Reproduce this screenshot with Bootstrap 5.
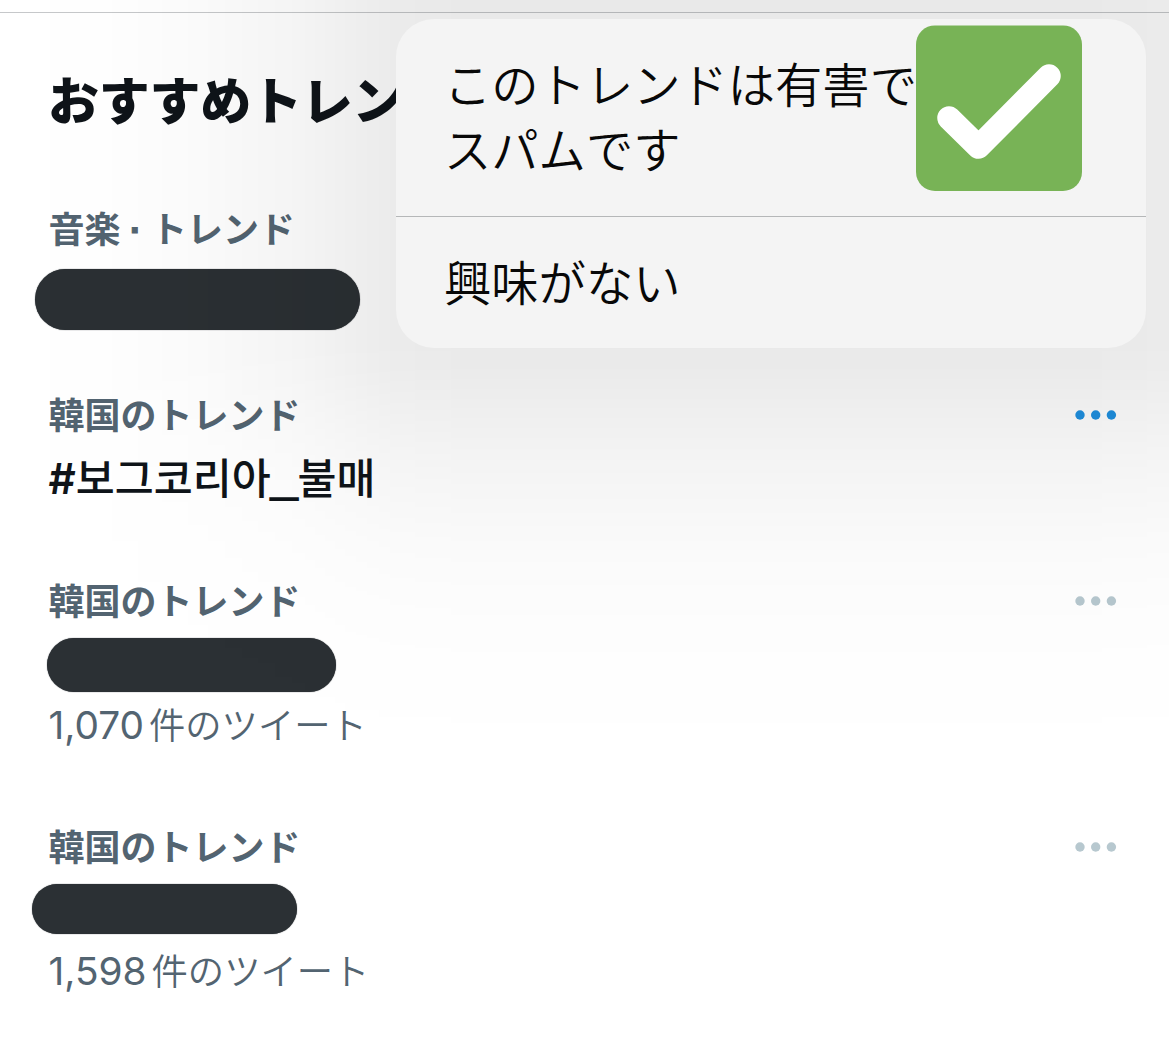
<!DOCTYPE html>
<html lang="ja">
<head>
<meta charset="utf-8">
<meta name="viewport" content="width=device-width, initial-scale=1">
<title>おすすめトレンド</title>
<link href="https://cdn.jsdelivr.net/npm/bootstrap@5.3.0/dist/css/bootstrap.min.css" rel="stylesheet">
<style>
body{font-family:"Noto Sans CJK JP","Noto Sans CJK KR",sans-serif;background:#fff;overflow:hidden}
.screen{width:1169px;height:1051px}
.topline{height:13px;border-bottom:1px solid #c6c8ca}
.trend-title{font-size:51px;line-height:60px;margin:55px 0 0 48px;color:#0f1419;font-weight:900;white-space:nowrap;letter-spacing:-.25px}
.trend{padding:0 50px 0 48.500px}
.t1{margin-top:77px;height:186px}.t2{height:186px}.t3{height:246px}.t4{height:200px}
.trend-cat{font-size:36px;line-height:44px;height:44px;color:#536471;font-weight:700;white-space:nowrap}
.middot{display:inline-block;width:30.500px;text-align:center;font-family:"Liberation Sans",sans-serif;line-height:1;-webkit-text-stroke:1px #536471}
.trend-tag{font:500 42.400px/60px Inter,"Noto Sans CJK KR",sans-serif;color:#0f1419;white-space:nowrap;margin-top:14px}
.trend-tag b{font-weight:600}
.trend-tag i{font:700 48px/1 "Liberation Sans",sans-serif;-webkit-text-stroke:2px #0f1419}
.trend-count{font:350 36.300px/50px "Noto Sans CJK JP DemiLight","Noto Sans CJK JP",sans-serif;color:#536471;white-space:nowrap}
.trend-count span{font:400 38.800px/50px Inter,sans-serif;margin-right:5px}
.redact{background:#2b3034;border-radius:31px;box-shadow:0 0 1px #2b3034}
.dots{width:44px;height:12px;fill:#b7c8cf;margin:18px 1.500px 0 0}
.dots.active{fill:#1f90e0}
.menu-shade{inset:0;z-index:0;
  background:linear-gradient(to right,rgba(0,0,0,0) 0,rgba(0,0,0,.005) 100px,rgba(0,0,0,.019) 200px,rgba(0,0,0,.030) 250px,rgba(0,0,0,.045) 300px,rgba(0,0,0,.062) 350px,rgba(0,0,0,.077) 396px,rgba(0,0,0,.085) 470px,rgba(0,0,0,.085) 1080px,rgba(0,0,0,.077) 1169px);
  -webkit-mask-image:linear-gradient(to bottom,#000 340px,rgba(0,0,0,.93) 370px,rgba(0,0,0,.74) 410px,rgba(0,0,0,.58) 445px,rgba(0,0,0,.43) 485px,rgba(0,0,0,.25) 540px,rgba(0,0,0,.13) 600px,rgba(0,0,0,.06) 660px,rgba(0,0,0,0) 760px)}
.menu{left:396px;top:19px;width:750px;z-index:2}
.menu-body{background:#f4f4f4;border-radius:38px;overflow:hidden;color:#080808;font-family:"Noto Sans CJK JP DemiLight","Noto Sans CJK JP",sans-serif;font-weight:350;font-size:47.300px;line-height:65px}
.menu-body>div{padding-left:48px;white-space:nowrap}
.m1{height:198px;padding-top:31px;border-bottom:1px solid #b5b7b8}
.m2{height:131px;padding-top:31px}
.check{left:520px;top:6px;width:166px;height:166px}
</style>
<script src="https://cdn.jsdelivr.net/npm/bootstrap@5.3.0/dist/js/bootstrap.bundle.min.js"></script>
</head>
<body>
<main class="screen position-relative overflow-hidden">
  <div class="topline"></div>
  <h1 class="trend-title">おすすめトレンド</h1>
  <section class="trend t1">
    <div class="trend-cat">音楽<span class="middot">·</span>トレンド</div>
    <div class="redact" style="width:325px;height:61px;margin:20px 0 0 -14px"></div>
  </section>
  <section class="trend t2 d-flex justify-content-between align-items-start">
    <div><div class="trend-cat">韓国のトレンド</div><div class="trend-tag"><b>#</b>보그코리아<i>_</i>불매</div></div>
    <svg class="dots active" viewBox="0 0 44 12"><circle cx="6" cy="6" r="4.700"/><circle cx="21.700" cy="6" r="4.700"/><circle cx="37.400" cy="6" r="4.700"/></svg>
  </section>
  <section class="trend t3 d-flex justify-content-between align-items-start">
    <div><div class="trend-cat">韓国のトレンド</div>
      <div class="redact" style="width:289px;height:54px;margin:17px 0 6px -2px"></div>
      <div class="trend-count"><span>1,070</span>件のツイート</div></div>
    <svg class="dots" viewBox="0 0 44 12"><circle cx="6" cy="6" r="4.700"/><circle cx="21.700" cy="6" r="4.700"/><circle cx="37.400" cy="6" r="4.700"/></svg>
  </section>
  <section class="trend t4 d-flex justify-content-between align-items-start">
    <div><div class="trend-cat">韓国のトレンド</div>
      <div class="redact" style="width:265px;height:50px;margin:17px 0 10px -16.500px"></div>
      <div class="trend-count"><span>1,598</span>件のツイート</div></div>
    <svg class="dots" viewBox="0 0 44 12"><circle cx="6" cy="6" r="4.700"/><circle cx="21.700" cy="6" r="4.700"/><circle cx="37.400" cy="6" r="4.700"/></svg>
  </section>
  <div class="menu-shade position-absolute"></div>
  <div class="menu position-absolute">
    <div class="menu-body position-relative">
      <div class="m1">このトレンドは有害で<br>スパムです</div>
      <div class="m2">興味がない</div>
    </div>
    <svg class="check position-absolute" viewBox="0 0 166 166"><rect y=".4" width="166" height="165.600" rx="19" fill="#78b356"/><path d="M33 93 62.500 122 133 51" fill="none" stroke="#fff" stroke-width="23.500" stroke-linecap="round" stroke-linejoin="round"/></svg>
  </div>
</main>
</body>
</html>
